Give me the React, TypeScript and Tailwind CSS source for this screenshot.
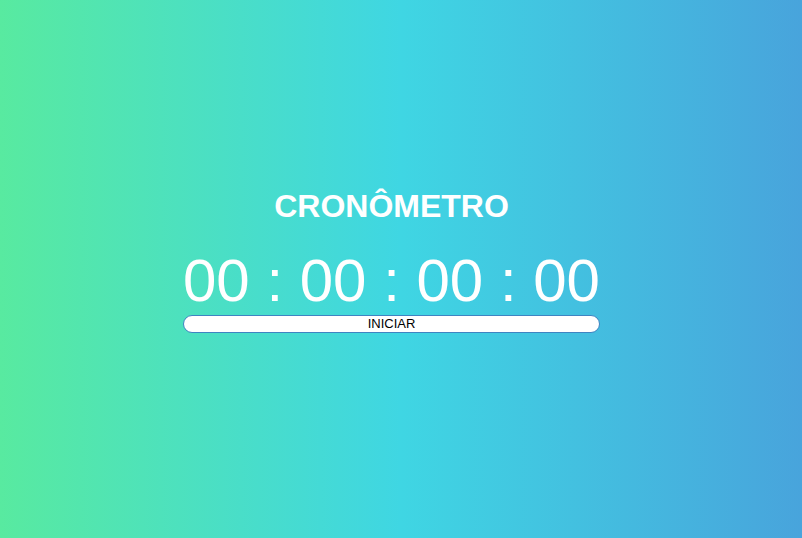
import React from "react";

export default function App() {
  return (
    <div
      className="flex min-h-screen w-full items-center justify-center bg-[linear-gradient(to_right,#58eaa0,#3fd6e3_50%,#48a4dc)] pb-[18px] pr-[19px] text-white"
      style={{ fontFamily: '"Liberation Sans", Arial, sans-serif' }}
    >
      <div className="flex flex-col items-center">
        <h1 className="text-[32px] font-bold leading-[37px]">CRONÔMETRO</h1>
        <div className="mt-[26px] text-[60px] leading-[60px]">00 : 00 : 00 : 00</div>
        <button className="mt-[4px] h-[18px] w-full rounded-[9px] border border-[#3f84c2] bg-white text-[13px] leading-[16px] text-black">
          INICIAR
        </button>
      </div>
    </div>
  );
}
